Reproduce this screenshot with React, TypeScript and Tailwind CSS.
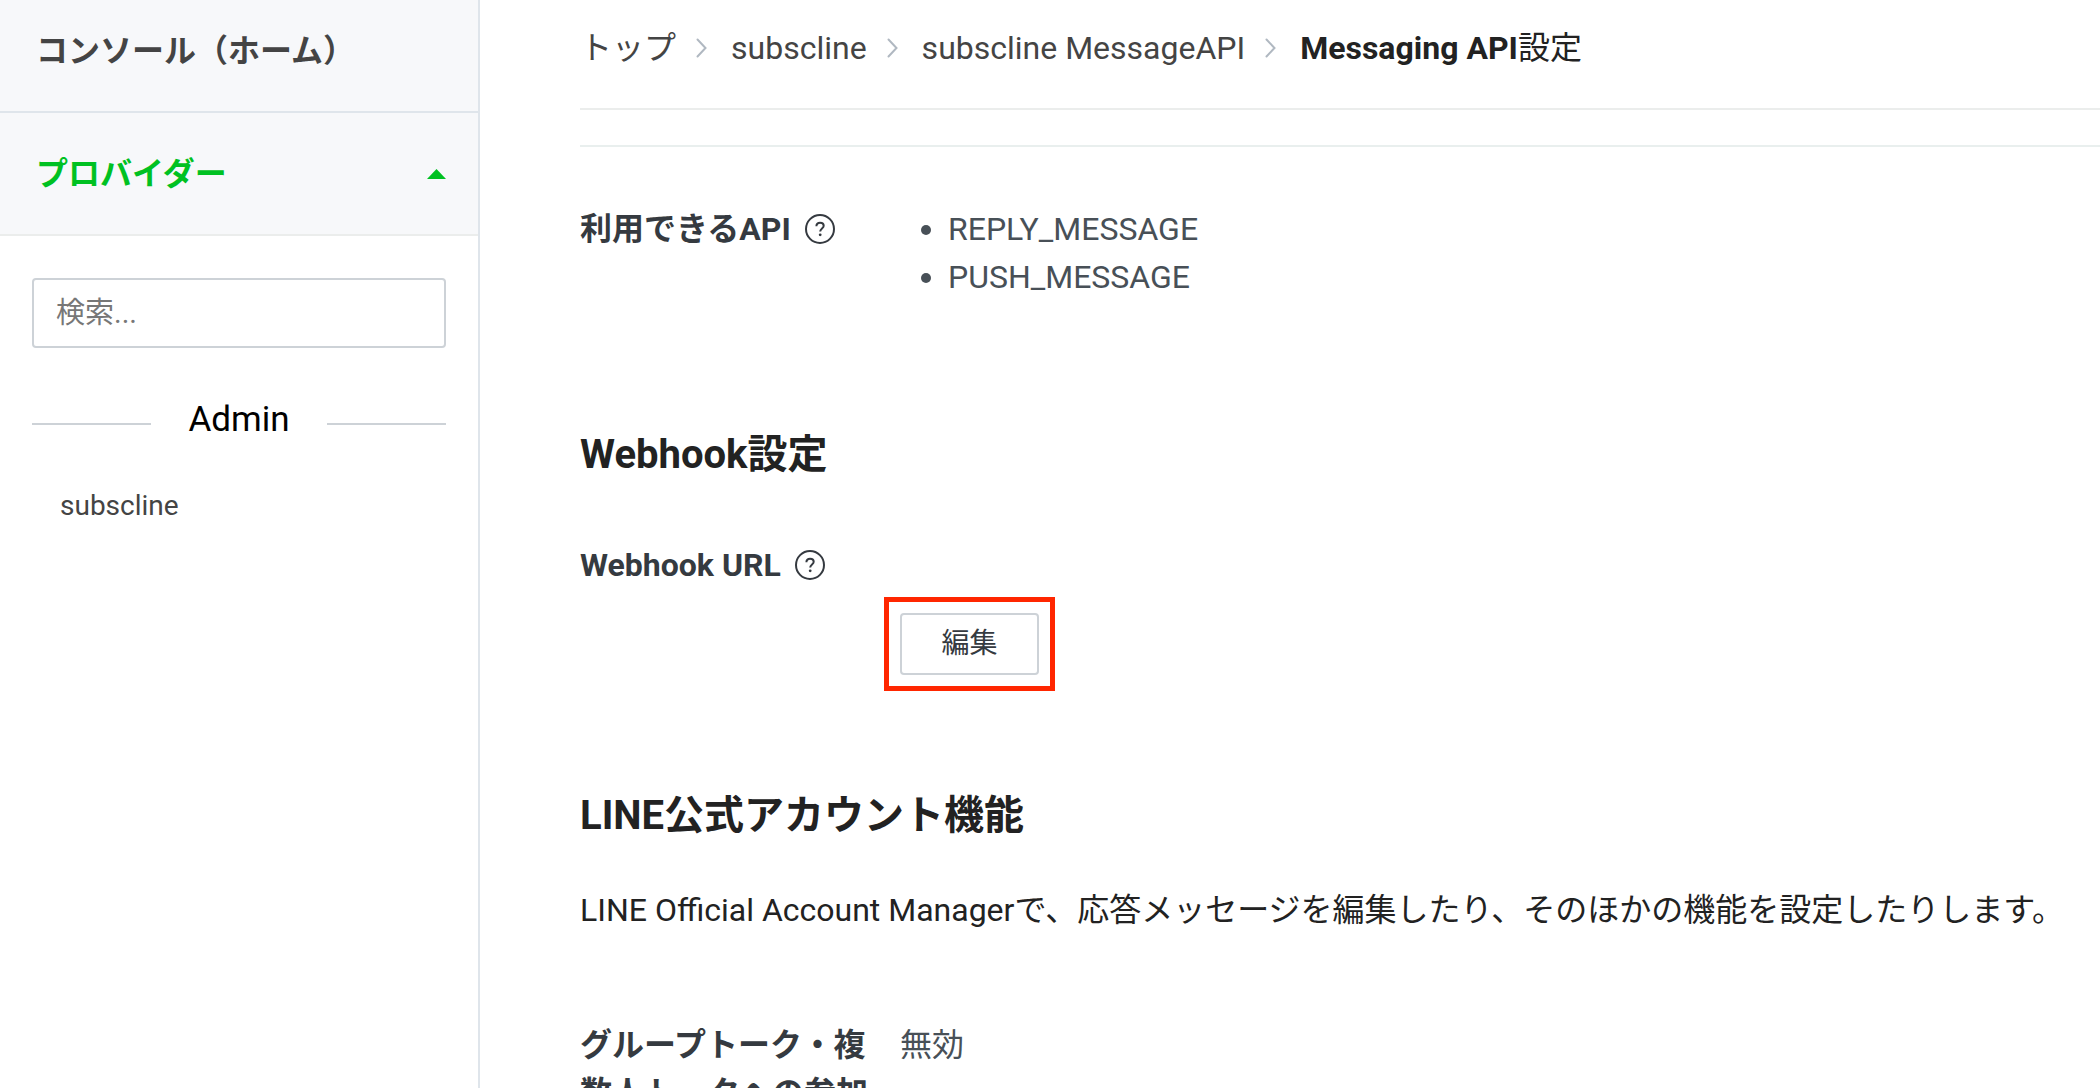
import type { ReactNode } from 'react';

const crumbs = ['トップ', 'subscline', 'subscline MessageAPI'];

const apis = ['REPLY_MESSAGE', 'PUSH_MESSAGE'];

const ChevronIcon = () => (
  <svg width="11" height="20" viewBox="0 0 11 20" fill="none" className="shrink-0 text-[#b0b8c1]" aria-hidden="true">
    <path d="M1.5 1.5L9.5 10L1.5 18.5" stroke="currentColor" strokeWidth="2" strokeLinecap="round" />
  </svg>
);

const HelpButton = ({ label }: { label: string }) => (
  <button type="button" aria-label={label} className="shrink-0 text-[#353a40]">
    <svg width="30" height="30" viewBox="0 0 30 30" fill="none" aria-hidden="true">
      <circle cx="15" cy="15" r="14" stroke="currentColor" strokeWidth="2" />
      <path
        d="M11.4 12.3C11.4 10.1 12.9 8.7 15.1 8.7C17.3 8.7 18.7 10 18.7 11.8C18.7 14.5 15.2 14.6 15.2 17.6"
        stroke="currentColor"
        strokeWidth="2"
      />
      <circle cx="15.2" cy="20.8" r="1.4" fill="currentColor" />
    </svg>
  </button>
);

const SettingRow = ({ label, help, children }: { label: string; help?: boolean; children: ReactNode }) => (
  <div className="flex">
    <div className="flex w-80 shrink-0 items-start pr-6">
      <h3 className="font-bold text-[#353a40]">{label}</h3>
      {help && (
        <span className="flex h-12 items-center pl-3.5">
          <HelpButton label={`${label}のヘルプ`} />
        </span>
      )}
    </div>
    <div className="text-[#485057]">{children}</div>
  </div>
);

const Sidebar = () => (
  <aside className="w-[480px] shrink-0 border-r-2 border-[#dfe5eb]">
    <nav className="bg-[#f7f8fa] font-bold">
      <a href="#home" className="block border-b-2 border-[#dfe5eb] px-9 pt-[27px] pb-9 text-[#444]">
        コンソール（ホーム）
      </a>
      <button
        type="button"
        className="flex w-full items-center justify-between border-b-2 border-[#ebedec] pt-[37px] pr-8 pb-9 pl-9 text-[#00c122]"
      >
        プロバイダー
        <svg width="19" height="10" viewBox="0 0 19 10" fill="currentColor" aria-hidden="true">
          <path d="M9.5 0L19 10H0Z" />
        </svg>
      </button>
    </nav>

    <div className="px-8 pt-[42px]">
      <input
        type="text"
        aria-label="検索"
        placeholder="検索..."
        className="block h-[70px] w-full rounded-sm border-2 border-[#cdd2d7] px-[22px] text-[29px] placeholder:text-[#777]"
      />
      <div className="mt-12 flex h-12 items-center text-[35px] text-black">
        <span className="mt-2 h-0.5 flex-1 bg-[#cdd2d7]" />
        <h2 className="px-[37px]">Admin</h2>
        <span className="mt-2 h-0.5 flex-1 bg-[#cdd2d7]" />
      </div>
      <a href="#subscline" className="mt-[42px] block px-7 text-[28px] leading-10 text-[#444]">
        subscline
      </a>
    </div>
  </aside>
);

const App = () => {
  return (
    <div
      lang="ja"
      className="flex h-screen overflow-hidden bg-white font-['Roboto','Noto_Sans_CJK_JP',sans-serif] text-[32px] leading-12 text-[#222]"
    >
      <Sidebar />

      <main className="min-w-0 flex-1 pl-[100px]">
        {/* BREADCRUMB */}
        <nav aria-label="breadcrumb" className="border-b-2 border-[#ebedec] pt-6 pb-9">
          <ol className="flex whitespace-nowrap">
            {crumbs.map((crumb) => (
              <li key={crumb} className="flex items-center">
                <a href="#crumb" className="text-[#444]">{crumb}</a>
                <span className="pr-6 pl-5">
                  <ChevronIcon />
                </span>
              </li>
            ))}
            <li aria-current="page">
              <span className="font-bold">Messaging API</span>設定
            </li>
          </ol>
        </nav>

        {/* AVAILABLE APIS */}
        <section className="mt-[35px] border-t-2 border-[#e9efee] pt-[58px]">
          <SettingRow label="利用できるAPI" help>
            <ul className="list-disc pl-12">
              {apis.map((api) => (
                <li key={api}>{api}</li>
              ))}
            </ul>
          </SettingRow>
        </section>

        {/* WEBHOOK */}
        <section className="pt-[124px]">
          <h2 className="mb-14 text-[40px] leading-15 font-bold">Webhook設定</h2>
          <SettingRow label="Webhook URL" help>
            <div className="relative mt-[72px]">
              <button
                type="button"
                className="block h-[62px] w-[139px] rounded-sm border-2 border-[#cdd2d7] text-[28px] leading-10 text-[#353a40]"
              >
                編集
              </button>
              <span className="pointer-events-none absolute -inset-4 border-5 border-[#ff2600]" />
            </div>
          </SettingRow>
        </section>

        {/* OFFICIAL ACCOUNT FEATURES */}
        <section className="pt-[111px]">
          <h2 className="mb-10 text-[40px] leading-15 font-bold">LINE公式アカウント機能</h2>
          <p className="mb-[87px]">
            LINE Official Account Managerで、応答メッセージを編集したり、そのほかの機能を設定したりします。
          </p>
          <SettingRow label="グループトーク・複数人トークへの参加">無効</SettingRow>
        </section>
      </main>
    </div>
  );
};

export default App;
